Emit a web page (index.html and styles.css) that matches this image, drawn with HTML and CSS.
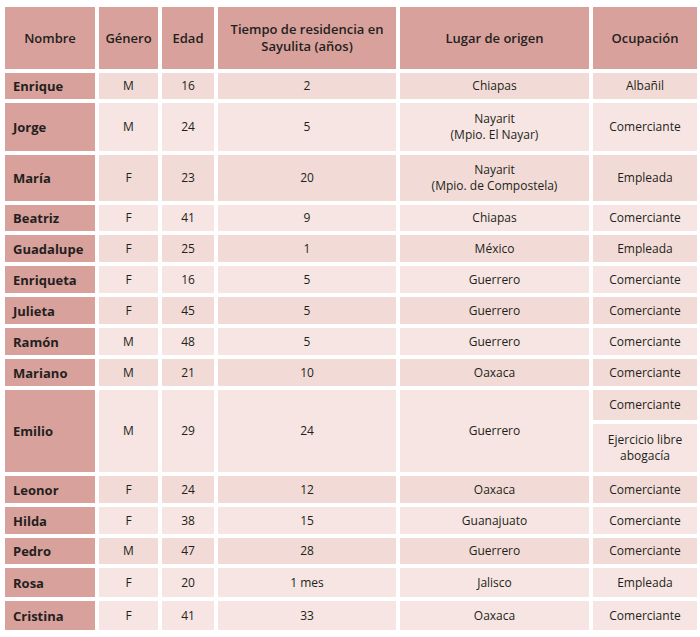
FILE: index.html
```html
<!DOCTYPE html>
<html lang="es">
<head>
<meta charset="utf-8">
<link rel="stylesheet" href="styles.css">
</head>
<body>
<table class="tbl">
  <colgroup>
    <col class="c1"><col class="c2"><col class="c3"><col class="c4"><col class="c5"><col class="c6">
  </colgroup>
  <thead>
    <tr class="h62">
      <th>Nombre</th><th>Género</th><th>Edad</th><th>Tiempo de residencia en<br>Sayulita (años)</th><th>Lugar de origen</th><th>Ocupación</th>
    </tr>
  </thead>
  <tbody>
    <tr class="h26 dk"><td class="name">Enrique</td><td>M</td><td>16</td><td>2</td><td>Chiapas</td><td>Albañil</td></tr>
    <tr class="h48 lt"><td class="name">Jorge</td><td>M</td><td>24</td><td>5</td><td>Nayarit<br>(Mpio. El Nayar)</td><td>Comerciante</td></tr>
    <tr class="h46 dk"><td class="name">María</td><td>F</td><td>23</td><td>20</td><td>Nayarit<br>(Mpio. de Compostela)</td><td>Empleada</td></tr>
    <tr class="h26 lt"><td class="name">Beatriz</td><td>F</td><td>41</td><td>9</td><td>Chiapas</td><td>Comerciante</td></tr>
    <tr class="h27 dk"><td class="name">Guadalupe</td><td>F</td><td>25</td><td>1</td><td>México</td><td>Empleada</td></tr>
    <tr class="h27 lt"><td class="name">Enriqueta</td><td>F</td><td>16</td><td>5</td><td>Guerrero</td><td>Comerciante</td></tr>
    <tr class="h27 dk"><td class="name">Julieta</td><td>F</td><td>45</td><td>5</td><td>Guerrero</td><td>Comerciante</td></tr>
    <tr class="h27 lt"><td class="name">Ramón</td><td>M</td><td>48</td><td>5</td><td>Guerrero</td><td>Comerciante</td></tr>
    <tr class="h27 dk"><td class="name">Mariano</td><td>M</td><td>21</td><td>10</td><td>Oaxaca</td><td>Comerciante</td></tr>
    <tr class="h30 lt"><td class="name" rowspan="2">Emilio</td><td rowspan="2">M</td><td rowspan="2">29</td><td rowspan="2">24</td><td rowspan="2">Guerrero</td><td class="sub">Comerciante</td></tr>
    <tr class="h48 lt"><td>Ejercicio libre<br>abogacía</td></tr>
    <tr class="h27 dk"><td class="name">Leonor</td><td>F</td><td>24</td><td>12</td><td>Oaxaca</td><td>Comerciante</td></tr>
    <tr class="h27 lt"><td class="name">Hilda</td><td>F</td><td>38</td><td>15</td><td>Guanajuato</td><td>Comerciante</td></tr>
    <tr class="h26 dk"><td class="name">Pedro</td><td>M</td><td>47</td><td>28</td><td>Guerrero</td><td>Comerciante</td></tr>
    <tr class="h29 lt"><td class="name">Rosa</td><td>F</td><td>20</td><td>1 mes</td><td>Jalisco</td><td>Empleada</td></tr>
    <tr class="h29 lt"><td class="name">Cristina</td><td>F</td><td>41</td><td>33</td><td>Oaxaca</td><td>Comerciante</td></tr>
  </tbody>
</table>
</body>
</html>
```
FILE: styles.css
```css
html, body {
  margin: 0;
  padding: 0;
  background: #ffffff;
}
body {
  font-family: "Open Sans", "Liberation Sans", sans-serif;
  color: #231f20;
}
.tbl {
  margin: 3px 0 0 1px;
  border-collapse: separate;
  border-spacing: 4px;
  table-layout: fixed;
  width: 699px;
}
.c1 { width: 90px; }
.c2 { width: 59px; }
.c3 { width: 52px; }
.c4 { width: 178px; }
.c5 { width: 189px; }
.c6 { width: 104px; }

.tbl th, .tbl td {
  padding: 0;
  text-align: center;
  vertical-align: middle;
}
.tbl th {
  background: #d9a19b;
  font-size: 13px;
  font-weight: 600;
  line-height: 17px;
}
.tbl td {
  font-size: 12px;
  line-height: 16px;
}
.tbl td.name {
  background: #d9a19b;
  text-align: left;
  padding-left: 8px;
  font-weight: 700;
  font-size: 13px;
}
.dk td { background: #f2dbd6; }
.lt td { background: #f6e5e2; }
.lt td.sub { background: #f3ddd8; }

.h62 { height: 62px; }
.h26 { height: 26px; }
.h27 { height: 27px; }
.h29 { height: 29px; }
.h30 { height: 30px; }
.h46 { height: 46px; }
.h48 { height: 48px; }
```
